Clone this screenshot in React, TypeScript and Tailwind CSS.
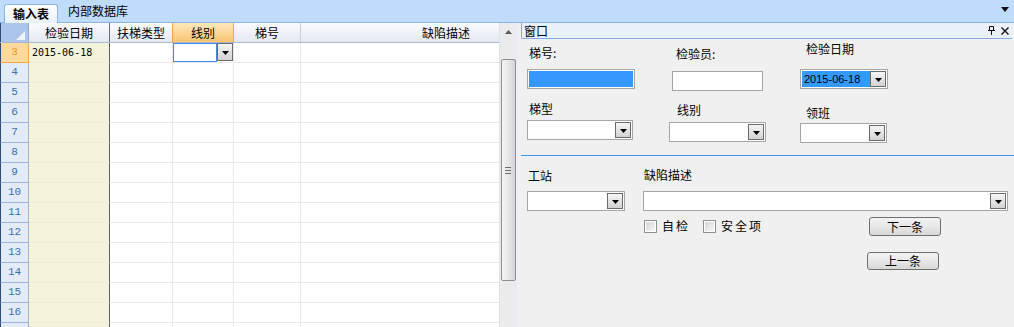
import React from "react";

const DropBtn = ({ className = "w-[16px] h-[16px]" }: { className?: string }) => (
  <div className={`${className} shrink-0 border border-[#6b6b6b] bg-linear-to-b from-[#f6f6f6] to-[#d2d2d2] flex items-center justify-center`}>
    <svg width="7" height="4" viewBox="0 0 7 4" className="mt-[2px]">
      <path d="M0 0h7L3.5 4z" fill="#000" />
    </svg>
  </div>
);

const Combo = ({ className, children }: { className: string; children?: React.ReactNode }) => (
  <div className={`${className} h-[20px] border border-[#a6a6a6] bg-white flex items-center p-[1px]`}>
    <div className="flex-1 h-full flex items-center">{children}</div>
    <DropBtn />
  </div>
);

const CheckBox = ({ label }: { label: string }) => (
  <div className="flex items-center gap-[5px]">
    <div className="w-[13px] h-[13px] border border-[#8e8f8f] bg-white p-[1px]">
      <div className="w-full h-full bg-linear-to-br from-[#d6d6d6] to-[#f7f7f7]" />
    </div>
    <span className="leading-[14px] tracking-[2px]">{label}</span>
  </div>
);

const WinButton = ({ label, className }: { label: string; className: string }) => (
  <button className={`${className} w-[72px] rounded-[3px] border border-[#707070] bg-linear-to-b from-[#f3f3f3] via-[#e8e8e8] to-[#d7d7d7] text-[12px] leading-[14px] text-black flex items-center justify-center`}>
    {label}
  </button>
);

// row 17 only peeks in at the bottom edge
const rows = [3, 4, 5, 6, 7, 8, 9, 10, 11, 12, 13, 14, 15, 16, 17];
const cols = "grid grid-cols-[29px_81px_63px_61px_67px_198px]";

export default function App() {
  return (
    <div className="w-[1014px] h-[327px] overflow-hidden bg-[#f0f0f0] text-[12px] text-black font-['Noto_Sans_CJK_SC','Noto_Sans',sans-serif]">
      {/* tab strip */}
      <div className="h-[23px] bg-[#bfdcfd] border-b border-[#8db3e5] flex items-end pl-[4px]">
        <div className="w-[54px] h-[19px] -mb-[1px] rounded-t-[3px] border border-b-0 border-[#8db3e5] bg-linear-to-b from-white to-[#eaf1fb] flex items-center justify-center font-bold leading-[14px]">
          输入表
        </div>
        <div className="ml-[10px] h-[22px] flex items-center leading-[14px]">内部数据库</div>
        <div className="flex-1" />
        <svg width="8" height="5" viewBox="0 0 8 5" className="mr-[5px] self-start mt-[7px]">
          <path d="M0 0h8L4 5z" fill="#111" />
        </svg>
      </div>

      <div className="flex h-[304px]">
        {/* grid */}
        <div className="w-[499px] h-full overflow-hidden bg-white">
          <div className={`${cols} h-[20px] border-b border-[#a9b9d0]`}>
            <div className="bg-[#abc6ea] border-r border-[#8fa9cf] border-l border-l-[#2b4c74] relative">
              <svg width="9" height="9" viewBox="0 0 9 9" className="absolute right-[3px] bottom-[2px]">
                <path d="M9 0V9H0z" fill="#eef3fb" />
              </svg>
            </div>
            <div className="bg-linear-to-b from-[#fbfcfe] to-[#e3e8f0] border-r border-[#6e7278] flex items-center justify-center">检验日期</div>
            <div className="bg-linear-to-b from-[#fbfcfe] to-[#e3e8f0] border-r border-[#c9ced6] flex items-center justify-center">扶梯类型</div>
            <div className="bg-linear-to-b from-[#fde8bb] to-[#f8c572] border-x border-[#f0a548] -ml-[1px] flex items-center justify-center">线别</div>
            <div className="bg-linear-to-b from-[#fbfcfe] to-[#e3e8f0] border-r border-[#c9ced6] flex items-center justify-center">梯号</div>
            <div className="bg-linear-to-b from-[#fbfcfe] to-[#e3e8f0] flex items-center justify-end pr-[29px]">缺陷描述</div>
          </div>
          {rows.map((n) => {
            const active = n === 3;
            return (
              <div key={n} className={`${cols} h-[20px]`}>
                <div
                  className={
                    active
                      ? "bg-[#fdd99c] border-r border-b border-[#f3a64a] border-l border-l-[#2b4c74] text-[#f0971c] flex items-center justify-center font-['Liberation_Mono',monospace] text-[11px]"
                      : "bg-[#e3ebf6] border-r border-b border-[#9db5d8] border-l border-l-[#2b4c74] text-[#3b70ad] flex items-center justify-center font-['Liberation_Mono',monospace] text-[11px]"
                  }
                >
                  {n < 17 ? n : ""}
                </div>
                <div className="bg-[#f4f4dd] border-r border-[#5f5f5f] border-b border-b-[#ecebd4] flex items-center pl-[3px] font-['DejaVu_Sans_Mono',monospace] text-[10px]">
                  {active ? "2015-06-18" : ""}
                </div>
                <div className="border-r border-b border-[#e9e9e9]" />
                <div className="border-r border-b border-[#e9e9e9] flex items-start">
                  {active && (
                    <>
                      <div className="w-[44px] h-[19px] border border-[#3b8de6] bg-white" />
                      <DropBtn className="w-[16px] h-[18px]" />
                    </>
                  )}
                </div>
                <div className="border-r border-b border-[#e9e9e9]" />
                <div className="border-b border-[#e9e9e9]" />
              </div>
            );
          })}
        </div>

        {/* scrollbar */}
        <div className="w-[17px] h-full bg-[#ebebeb] border-l border-[#e2e2e2] px-[1px] flex flex-col items-center">
          <div className="h-[17px] flex items-center justify-center">
            <svg width="7" height="4" viewBox="0 0 7 4">
              <path d="M3.5 0L7 4H0z" fill="#5a5a5a" />
            </svg>
          </div>
          <div className="mt-[19px] w-[15px] h-[222px] rounded-[2px] border border-[#8f9090] bg-linear-to-r from-[#f5f5f5] via-[#e6e6e6] to-[#d4d4d4] flex flex-col items-center justify-center gap-[2px]">
            <div className="w-[6px] h-[1px] bg-[#6d6d6d]" />
            <div className="w-[6px] h-[1px] bg-[#6d6d6d]" />
            <div className="w-[6px] h-[1px] bg-[#6d6d6d]" />
          </div>
        </div>

        {/* docked window */}
        <div className="flex-1 h-full bg-[#f0f0f0] border-l border-[#e6edf7]">
          <div className="ml-[4px] mr-[2px] h-[16px] bg-[#eaf1fb] border-l border-b border-[#86aadf] rounded-bl-[2px] flex items-center pl-[2px] leading-[14px]">
            <span>窗口</span>
            <div className="flex-1" />
            <svg width="7" height="9" viewBox="0 0 7 9" className="mr-[6px]">
              <path d="M1.5 0.5h4v4h-4z M0 4.5h7 M3.5 4.5v4.5" stroke="#111" strokeWidth="1" fill="none" />
            </svg>
            <svg width="8" height="8" viewBox="0 0 8 8" className="mr-[3px]">
              <path d="M0.5 0.5l7 7M7.5 0.5l-7 7" stroke="#111" strokeWidth="1.4" />
            </svg>
          </div>

          {/* upper fields */}
          <div className="flex items-start">
            <div className="ml-[10px] w-[108px] flex flex-col">
              <div className="mt-[7px] ml-[2px] leading-[14px]">梯号:</div>
              <div className="mt-[9px] h-[20px] border border-[#a6a6a6] bg-white p-[1px]">
                <div className="w-full h-full bg-[#3399ff]" />
              </div>
              <div className="mt-[13px] ml-[2px] leading-[14px]">梯型</div>
              <Combo className="mt-[4px] w-[106px]" />
            </div>
            <div className="ml-[34px] w-[97px] flex flex-col">
              <div className="mt-[8px] ml-[7px] leading-[14px]">检验员:</div>
              <div className="mt-[10px] ml-[3px] w-[91px] h-[20px] border border-[#a6a6a6] bg-white" />
              <div className="mt-[12px] ml-[8px] leading-[14px]">线别</div>
              <Combo className="mt-[5px] w-[97px]" />
            </div>
            <div className="ml-[34px] w-[88px] flex flex-col">
              <div className="mt-[3px] ml-[6px] leading-[14px]">检验日期</div>
              <Combo className="mt-[13px] w-[88px]">
                <div className="h-full w-[68px] bg-[#3399ff] flex items-center pl-[2px] font-['Liberation_Sans',sans-serif] text-[11px] text-black">
                  2015-06-18
                </div>
              </Combo>
              <div className="mt-[17px] ml-[6px] leading-[14px]">领班</div>
              <Combo className="mt-[3px] w-[87px]" />
            </div>
          </div>

          <div className="ml-[4px] mt-[12px] h-[1px] bg-[#3d93ec]" />

          {/* lower fields */}
          <div className="flex items-start">
            <div className="ml-[10px] w-[98px] flex flex-col">
              <div className="mt-[13px] ml-[1px] leading-[14px]">工站</div>
              <Combo className="mt-[8px] w-[98px]" />
            </div>
            <div className="ml-[18px] w-[365px] flex flex-col">
              <div className="mt-[12px] ml-[1px] leading-[14px]">缺陷描述</div>
              <Combo className="mt-[9px] w-[365px]" />
              <div className="flex items-start">
                <div className="w-[225px] mt-[8px] ml-[1px] flex gap-[13px]">
                  <CheckBox label="自检" />
                  <CheckBox label="安全项" />
                </div>
                <div className="flex flex-col">
                  <WinButton label="下一条" className="mt-[6px] h-[19px]" />
                  <WinButton label="上一条" className="mt-[16px] -ml-[2px] h-[18px]" />
                </div>
              </div>
            </div>
          </div>
        </div>
      </div>
    </div>
  );
}
